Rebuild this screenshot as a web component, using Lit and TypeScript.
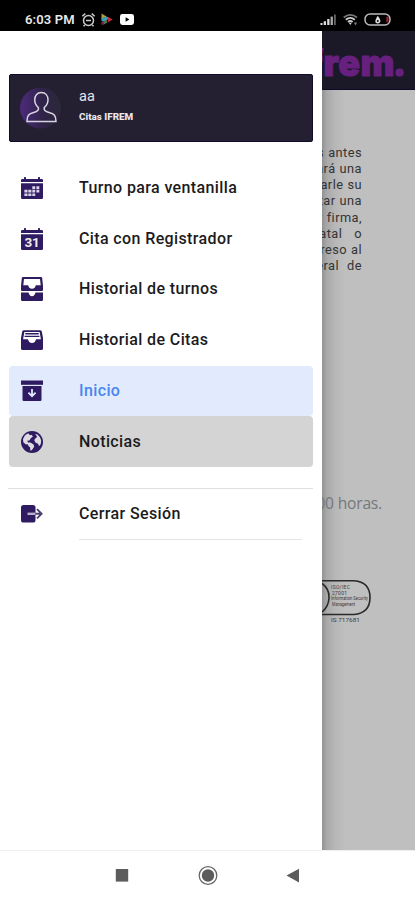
import { LitElement, html, svg, css } from "lit";
import { customElement } from "lit/decorators.js";
import { classMap } from "lit/directives/class-map.js";

const icons: Record<string, unknown> = {
  month: svg`
    <path d="M0 3.2Q0 2 1.2 2H3V.6Q3 0 3.7 0H4.3Q5 0 5 .6V2H17V.6Q17 0 17.7 0H18.3Q19 0 19 .6V2H20.8Q22 2 22 3.2V5H0Z"/>
    <path d="M0 6.3H22V20.8Q22 22 20.8 22H1.2Q0 22 0 20.8Z"/>
    <g fill="#dcd4e8"><path d="M11.3 9.2h2.9v2.8h-2.9zM15.4 9.2h2.9v2.8h-2.9zM3.4 12.8h3.1v2.8H3.4zM7.3 12.8h3.1v2.8H7.3zM11.3 12.8h2.9v2.8h-2.9zM15.4 12.8h2.9v2.8h-2.9zM3.4 16.4h3.1v2.6H3.4zM7.3 16.4h3.1v2.6H7.3zM11.3 16.4h2.9v2.6h-2.9z"/></g>`,
  day: svg`
    <path d="M0 3.2Q0 2 1.2 2H3V.6Q3 0 3.7 0H4.3Q5 0 5 .6V2H17V.6Q17 0 17.7 0H18.3Q19 0 19 .6V2H20.8Q22 2 22 3.2V5H0Z"/>
    <path d="M0 6.3H22V20.8Q22 22 20.8 22H1.2Q0 22 0 20.8Z"/>
    <text class="num" x="11" y="18.9" text-anchor="middle" fill="#eee">31</text>`,
  trays: svg`
    <path fill-rule="evenodd" d="M2-1H20Q21-1 21.2 0L22 8V12Q22 13 21 13H1Q0 13 0 12V8L.8 0Q1-1 2-1ZM3 1L2.3 7.2H7.2Q8 10.8 11 10.8T14.8 7.2H19.7L19 1Z"/>
    <path d="M0 14.6H7.5Q8.4 18.2 11 18.2T14.5 14.6H22V21.8Q22 23 20.8 23H1.2Q0 23 0 21.8Z"/>`,
  tray: svg`
    <path fill-rule="evenodd" d="M3 1.2H19Q20.4 1.2 20.8 2.5L22 9V19.5Q22 21 20.5 21H1.5Q0 21 0 19.5V9L1.2 2.5Q1.6 1.2 3 1.2ZM3.4 3L2.1 10.3H7Q7.6 14 11 14T15 10.3H19.9L18.6 3Z"/>
    <path d="M4.3 4.1H17.7V5.4H4.3ZM3.6 6.7H18.4V8.1H3.6Z"/>`,
  archive: svg`
    <path d="M0 .5H22V4.8H0Z"/>
    <path fill-rule="evenodd" d="M1.5 6H20.5V19.8Q20.5 21 19.3 21H2.7Q1.5 21 1.5 19.8ZM10.1 9V14L8 12 6.8 13.2 11 17.4 15.2 13.2 14 12 11.9 14V9Z"/>`,
  globe: svg`
    <circle cx="11" cy="11" r="11"/>
    <path class="land" d="M7.2 2.2L4 4.2 2 8 2.3 11.2 4.6 13.2 7 13.5 7.6 15.2 9 16.2 9.4 19.7 11 19 13.2 15.8 12.6 13.4 9.4 11.6 7 11.5 6.2 9.8 8.4 9.6 9.8 7.2 12 5.6 10.4 3.7 9 4.2ZM14.2 2.8L16.4 3.4 19 6.2 20.2 9.5 19.8 13 18.1 15.3 17 12.8 14.4 11.6 13.2 9 14.8 7 16.2 6Z"/>`,
  exit: svg`
    <rect x="0" y="2" width="14.5" height="17.5" rx="2.6"/>
    <path d="M6.5 9.6H14V12H6.5Z" fill="#b7b2c6"/>
    <path class="arrow" d="M14.5 10.8H20.4M16 6.2L20.6 10.8 16 15.4"/>`,
};

@customElement("menu-item")
class MenuItem extends LitElement {
  static properties = { icon: {}, label: {}, tone: {} };
  declare icon: string;
  declare label: string;
  declare tone: string;
  static styles = css`
    :host { display: block; }
    .row { height: 50.8px; display: flex; align-items: center; border-radius: 4px; padding-left: 12px; color: #1b1b1d; box-sizing: border-box; }
    .active { background: #e2eafe; color: #4a85f0; }
    .pressed { background: #d4d4d4; }
    .icon { width: 22px; height: 22px; overflow: visible; fill: #2f1b61; margin-right: 36px; flex: none; }
    .label { font: 500 16px/20px Roboto, sans-serif; letter-spacing: .38px; white-space: nowrap; }
    .num { font: 700 13.5px Roboto, sans-serif; letter-spacing: -.3px; }
    .land { fill: #dcdae2; }
    .arrow { fill: none; stroke: #4b4070; stroke-width: 1.9; }
  `;
  render() {
    const cls = { row: true, active: this.tone === "active", pressed: this.tone === "pressed" };
    return html`<div class=${classMap(cls)}>
      <svg class="icon" viewBox="0 0 22 22">${icons[this.icon]}</svg>
      <span class="label">${this.label}</span>
    </div>`;
  }
}

@customElement("app-root")
class AppRoot extends LitElement {
  static styles = css`
    :host { display: flex; flex-direction: column; width: 415px; height: 900px; overflow: hidden; background: #fff; font-family: Roboto, sans-serif; }
    .status { height: 31px; flex: none; background: #000; color: #e8e8e8; display: flex; align-items: center; padding: 8px 24px 0 25px; box-sizing: border-box; }
    .time { font: 600 13px/16px Roboto, sans-serif; letter-spacing: .15px; width: 56px; white-space: nowrap; }
    .left, .right { height: 16px; overflow: visible; flex: none; }
    .left { width: 56px; }
    .right { width: 72px; margin-left: auto; }
    .stage { height: 819px; flex: none; display: flex; }
    .drawer { width: 322px; flex: none; background: #fff; padding: 42.6px 9px 0; box-sizing: border-box; }
    .profile { height: 68px; background: #242032; border: 1px solid #100b2c; border-radius: 2px; box-sizing: border-box; display: flex; align-items: center; padding-left: 10px; }
    .avatar { width: 42px; height: 42px; margin-right: 17px; }
    .name { color: #e6e4ea; font: 400 14.5px/18px Roboto, sans-serif; margin-top: -5px; }
    .org { color: #ebe9ef; font: 800 9.9px/12px Roboto, sans-serif; margin-top: 5px; }
    .menu { margin-top: 20.9px; }
    .rule { height: 1px; background: #e0e0e2; margin: 20.5px 0 0 -1px; }
    .subrule { height: 1px; background: #e4e4e6; margin: -1px 11px 0 70px; }
    .page { flex: 1; min-width: 0; overflow: hidden; background: linear-gradient(90deg, #929292 0, #a9a9a9 5px, #b7b7b7 13px, #bfbfbf 24px); }
    .brand { height: 59px; background: #1b1828; border-bottom: 1px solid #0d0927; box-sizing: border-box; display: flex; justify-content: flex-end; align-items: center; padding: 6px 8.5px 0 0; overflow: hidden; }
    .logo { color: #68207f; font: 900 36px/40px Inter, sans-serif; letter-spacing: .3px; -webkit-text-stroke: 1px #68207f; }
    .dot { margin-left: -2px; }
    .copy { margin-top: 55px; padding-right: 53px; display: flex; flex-direction: column; }
    .line { height: 16.15px; display: flex; justify-content: flex-end; gap: 4px; font: 400 12.8px/16.15px Roboto, sans-serif; letter-spacing: .45px; color: #343434; white-space: nowrap; }
    .wide { gap: 12px; }
    .mid { gap: 8px; }
    .hours { margin-top: 217.8px; padding-right: 33px; display: flex; justify-content: flex-end; font: 400 15.6px/22px "Open Sans", sans-serif; color: #75777b; white-space: nowrap; letter-spacing: -.2px; }
    .seal { display: block; width: 93px; height: 52px; margin-top: 63.5px; }
    .tiny { font: 400 5px Roboto, sans-serif; fill: #3e3e3e; }
    .code { font: 400 6px Roboto, sans-serif; fill: #3e3e3e; }
    .nav { flex: 1; border-top: 1px solid #eee; background: #fff; }
    .keys { display: block; width: 415px; height: 49px; }
  `;
  render() {
    const lines: [string, string, string?][] = [
      ["días", "antes"], ["dará", "una"], ["enviarle", "su"], ["presentar", "una"],
      ["y", "firma,"], ["natal", "o", "wide"], ["ingreso", "al"], ["general", "de", "mid"],
    ];
    return html`
      <div class="status">
        <span class="time">6:03 PM</span>
        <svg class="left" viewBox="81 12 56 16">
          <g fill="none" stroke="#ccc" stroke-width="1.5"><circle cx="88.5" cy="20.5" r="5"/><path d="M82.3 16.3L85.3 13.6M94.7 16.3L91.7 13.6M86 20.5H91M84.8 25L83.5 26.3M92.2 25L93.5 26.3"/></g>
          <path d="M101.5 13.5L106.5 16.5 101.5 19.5Z" fill="#b49d37"/><path d="M101.5 18L107 16.5 109 18.5 104 22 101.5 21Z" fill="#3c9db4"/><path d="M101.5 22L105 21 101.5 26Z" fill="#8a1c5b"/><path d="M108 17L112.8 19.5 108 22.3Z" fill="#c62c3c"/><path d="M104 21.5L107 20 107.5 22.5 103 25Z" fill="#50774c"/>
          <rect x="120" y="14" width="14" height="11" rx="2.4" fill="#fff"/><path d="M125.6 17.2V21.8L129.4 19.5Z"/>
        </svg>
        <svg class="right" viewBox="319 12 72 16">
          <path d="M320.5 25V23h2v2zM323.7 25V21.2h2.3V25zM327.2 25V19h2.3v6z" fill="#ddd"/><path d="M330.6 25V16.6h2.3V25z" fill="#aaa"/><path d="M334 25V14.4h1.8V25z" fill="#666"/>
          <g fill="none" stroke="#ccc" stroke-width="1.8"><path d="M343.7 17.5Q350.3 12.2 357 17.5" stroke="#777"/><path d="M345.8 19.7Q350.3 16 354.8 19.7"/><path d="M348 22Q350.3 20 352.6 22"/></g><path d="M348.8 22.8H351.8L350.3 25Z" fill="#ddd"/><path d="M354 22.5h3l-1.5 3z" fill="#888"/>
          <rect x="365" y="14" width="25" height="11" rx="5" fill="none" stroke="#bbb" stroke-width="1.5"/><path d="M386.3 16.7H388.6V22.3H386.3Z" fill="#8e2530"/><path d="M377.8 15.7Q381.5 20.5 380 22.5 377.8 24.3 375.6 22.5 374.5 20.5 377.8 15.7Z" fill="#ddd"/><circle cx="377.8" cy="21" r=".9"/>
        </svg>
      </div>
      <div class="stage">
        <div class="drawer">
          <div class="profile">
            <svg class="avatar" viewBox="0 0 42 42">
              <defs><linearGradient id="glow"><stop offset="0" stop-color="#4c2a7c"/><stop offset=".55" stop-color="#302348"/><stop offset="1" stop-color="#2b2838"/></linearGradient></defs>
              <circle cx="20.5" cy="21" r="20.5" fill="url(#glow)"/>
              <path d="M21.3 5.5C17 5.5 14.7 8.8 14.7 12.8C14.7 16 16 18.7 18.4 20.7C19 23.5 17.6 24.6 13.8 25.5C8.5 26.8 7 28.5 7 34.5H36C36 28.5 34.2 26.8 29 25.5C25 24.6 23.6 23.5 24.2 20.7C26.6 18.7 28 16 28 12.8C28 8.8 25.6 5.5 21.3 5.5Z" fill="none" stroke="#d8d5e0" stroke-width="1.5"/>
            </svg>
            <div><div class="name">aa</div><div class="org">Citas IFREM</div></div>
          </div>
          <div class="menu">
            <menu-item icon="month" label="Turno para ventanilla"></menu-item>
            <menu-item icon="day" label="Cita con Registrador"></menu-item>
            <menu-item icon="trays" label="Historial de turnos"></menu-item>
            <menu-item icon="tray" label="Historial de Citas"></menu-item>
            <menu-item icon="archive" label="Inicio" tone="active"></menu-item>
            <menu-item icon="globe" label="Noticias" tone="pressed"></menu-item>
          </div>
          <div class="rule"></div>
          <menu-item icon="exit" label="Cerrar Sesión"></menu-item>
          <div class="subrule"></div>
        </div>
        <div class="page">
          <div class="brand"><span class="logo">ifrem<span class="dot">.</span></span></div>
          <div class="copy">${lines.map(([a, b, c]) => html`<div class=${classMap({ line: true, wide: c === "wide", mid: c === "mid" })}><span>${a}</span><span>${b}</span></div>`)}</div>
          <div class="hours">18:00 horas.</div>
          <svg class="seal" viewBox="322 577 93 52">
            <g fill="none" stroke="#292929" stroke-width="1.6"><path d="M322 580.8H354Q370 582 370 597.5T354 614.5H322"/><path d="M322 583.5Q329.5 589 329 598T322 612"/></g>
            <g class="tiny"><text x="331" y="589" textLength="19">ISO/IEC</text><text x="332" y="595" textLength="15">27001</text><text x="331" y="600.3" textLength="37" lengthAdjust="spacingAndGlyphs">Information Security</text><text x="332" y="605.5" textLength="23" lengthAdjust="spacingAndGlyphs">Management</text></g>
            <text class="code" x="331" y="622" textLength="29" lengthAdjust="spacingAndGlyphs">IS 717681</text>
          </svg>
        </div>
      </div>
      <div class="nav">
        <svg class="keys" viewBox="0 851 415 49">
          <rect x="115.8" y="869" width="12.4" height="12.6" fill="#5c5c5c"/>
          <circle cx="208" cy="875.5" r="6.2" fill="#5c5c5c"/><circle cx="208" cy="875.5" r="8.8" fill="none" stroke="#666" stroke-width="1.3"/>
          <path d="M286.5 875.5L299 868.7V882.5Z" fill="#5c5c5c"/>
        </svg>
      </div>`;
  }
}
